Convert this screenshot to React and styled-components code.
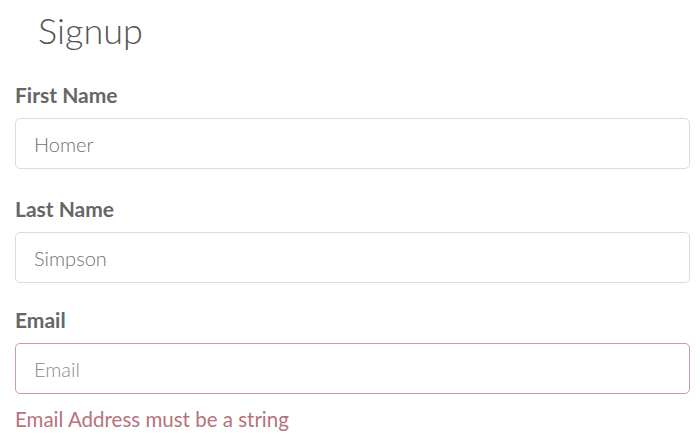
import React from "react";
import styled, { createGlobalStyle } from "styled-components";

const Global = createGlobalStyle`
  html, body { margin: 0; padding: 0; background: #ffffff; }
  body { font-family: Lato, "Open Sans", sans-serif; }
`;

const Page = styled.form`
  display: flex;
  flex-direction: column;
  padding: 0 10px 0 15px;
  width: 700px;
  box-sizing: border-box;
`;

const Title = styled.h1`
  margin: 0;
  padding: 8px 0 0 23px;
  font-family: Lato, sans-serif;
  font-weight: 300;
  font-size: 36px;
  line-height: 44px;
  color: #555555;
`;

const Field = styled.div`
  display: flex;
  flex-direction: column;
  margin-top: ${(p) => p.$top}px;
`;

const Label = styled.label`
  font-family: Lato, sans-serif;
  font-weight: 700;
  font-size: 21px;
  line-height: 24px;
  color: #666666;
  margin-bottom: 11px;
`;

const Input = styled.input`
  box-sizing: border-box;
  width: 100%;
  height: 51px;
  padding: 0 18px;
  border: 1px solid ${(p) => (p.$error ? "#cf99a0" : "#dcdcdc")};
  border-radius: 5px;
  font-family: Lato, sans-serif;
  font-weight: 300;
  font-size: 20px;
  color: #707070;
  background: #fff;
  outline: none;
  &::placeholder { color: #8a8a8a; opacity: 1; }
`;

const ErrorText = styled.div`
  font-family: Lato, sans-serif;
  font-weight: 400;
  font-size: 20.5px;
  line-height: 24px;
  color: #b5737b;
  margin-top: 13px;
`;

export default function App() {
  return (
    <>
      <Global />
      <Page>
        <Title>Signup</Title>
        <Field $top={31}>
          <Label>First Name</Label>
          <Input defaultValue="Homer" />
        </Field>
        <Field $top={28}>
          <Label>Last Name</Label>
          <Input defaultValue="Simpson" />
        </Field>
        <Field $top={25}>
          <Label>Email</Label>
          <Input $error placeholder="Email" />
          <ErrorText>Email Address must be a string</ErrorText>
        </Field>
      </Page>
    </>
  );
}
